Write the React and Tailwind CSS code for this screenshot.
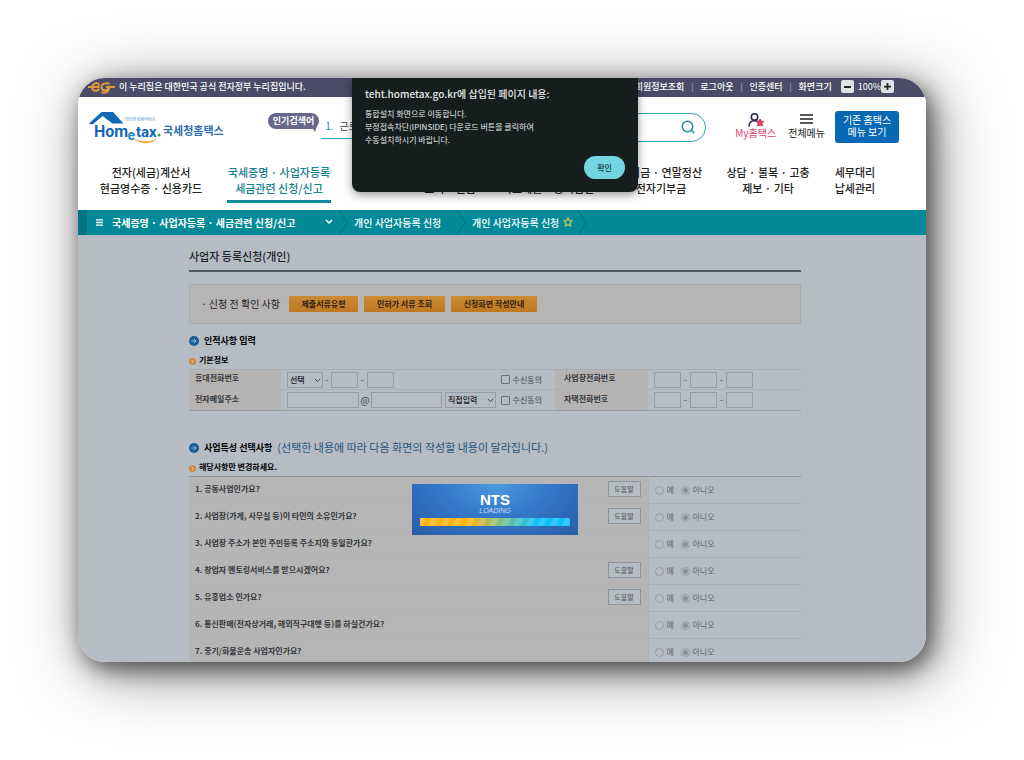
const KR = "font-['Noto_Sans_CJK_KR',sans-serif]";

const EgMark = () => (
  <svg viewBox="0 0 30 16" className="h-4 w-[30px] shrink-0" fill="none" stroke="#e39a3c" strokeWidth="2">
    <path d="M1 8h10.500c1.200-3.800-1.200-4.200-3-3.700C5.200 5.200 4.300 9 5.800 10.800c1.500 1.600 4.700 1.200 6.700-.8" />
    <path d="M22.500 4.800c-4-1.600-8 .2-8 3.400 0 3.600 5 4.300 7.500 1.300-.5 3.500-3.500 5-7.500 4M19 8h9" />
  </svg>
);

const HomeLogo = () => (
  <svg viewBox="0 0 74 34" className="h-[34px] w-[74px] shrink-0" role="img" aria-label="Hometax">
    <path d="M12.500 2H24l10.500 11.500H23.500L13.500 6 3.500 14.500 0 13.500z" fill="#1467b3" />
    <text x="36" y="11" fontSize="4" fill="#3f7fb5">인터넷 납세서비스</text>
    <g fontFamily="Roboto, sans-serif" fontWeight="700" fill="#1467b3">
      <text x="5" y="26.500" fontSize="16">Hom</text>
      <text x="38.500" y="29.500" fontSize="14" fill="#1c8fd0">e</text>
      <text x="47" y="26.500" fontSize="15">tax</text>
    </g>
    <circle cx="70" cy="25" r="1.500" fill="#35a853" />
    <path d="M46 29.500c6 4.500 15 4.500 21 0-6 2.700-15 2.700-21 0z" fill="#f0a12c" stroke="#f0a12c" strokeWidth=".5" />
  </svg>
);

const Crumb = () => (
  <svg viewBox="0 0 10 25" className="h-[25px] w-[10px] shrink-0" fill="none" stroke="#016f7e" strokeWidth="1">
    <path d="M1 0l8 12.500L1 25" />
  </svg>
);

const BlueBullet = () => (
  <svg viewBox="0 0 10 10" className="size-[10px] shrink-0">
    <circle cx="5" cy="5" r="5" fill="#175f96" />
    <path d="M2.500 5h4.500M5 3l2 2-2 2" stroke="#9dbcd6" fill="none" />
  </svg>
);

const OrangeBullet = () => (
  <svg viewBox="0 0 8 8" className="mt-[2px] size-[7px] shrink-0">
    <circle cx="4" cy="4" r="4" fill="#c98a3c" />
    <path d="M3 2l2 2-2 2" stroke="#e3d3bd" fill="none" />
  </svg>
);

const Down = () => (
  <svg viewBox="0 0 8 6" className="pointer-events-none absolute top-[6px] right-[2px] h-[5px] w-[7px]" fill="none" stroke="#33373c">
    <path d="M1 1l3 3.500L7 1" />
  </svg>
);

const box = "h-4 border border-[#989da3] bg-transparent px-1 text-[8px]";

const Pick = ({ label, text, width }) => (
  <span className="relative inline-flex">
    <select aria-label={label} className={`${box} ${width} appearance-none pl-[2px] leading-[14px] font-medium text-[#1d2024]`}>
      <option>{text}</option>
    </select>
    <Down />
  </span>
);

const Phone = ({ label }) => (
  <div className="flex items-center text-[8px] text-[#33373c]">
    {[0, 1, 2].map((i) => (
      <span key={i} className="flex items-center">
        {i > 0 && <span className="w-[9px] text-center">-</span>}
        <input aria-label={`${label} ${i + 1}`} className={`${box} w-[27px]`} />
      </span>
    ))}
  </div>
);

const Agree = ({ label }) => (
  <label className="flex items-center gap-[3px] text-[8px] text-[#44484e]">
    <input type="checkbox" aria-label={label} className="size-[9px] appearance-none rounded-[1px] border border-[#6b7077]" />
    수신동의
  </label>
);

const th = "bg-[#b6b4b3] pb-[3px] text-left text-[8px] font-bold text-[#33363a]";

const menus = [
  ["전자(세금)계산서", "현금영수증 · 신용카드"],
  ["국세증명 · 사업자등록", "세금관련 신청/신고"],
  ["세금신고"],
  ["납부", "고지 · 환급"],
  ["지급명세서", "자료제출 · 공익법인"],
  ["장려금 · 연말정산", "전자기부금"],
  ["상담 · 불복 · 고충", "제보 · 기타"],
  ["세무대리", "납세관리"],
];

const questions = [
  ["1. 공동사업인가요?", true],
  ["2. 사업장(가게, 사무실 등)이 타인의 소유인가요?", true],
  ["3. 사업장 주소가 본인 주민등록 주소지와 동일한가요?", false],
  ["4. 창업자 멘토링서비스를 받으시겠어요?", true],
  ["5. 유흥업소 인가요?", true],
  ["6. 통신판매(전자상거래, 해외직구대행 등)를 하실건가요?", false],
  ["7. 중기/화물운송 사업자인가요?", false],
];

const radio = "size-[9px] appearance-none rounded-full border border-[#989da3] checked:bg-[radial-gradient(circle,#8a8f95_0_2px,transparent_3px)]";

function TopBar() {
  return (
    <div className="flex h-[19px] shrink-0 items-center bg-[#4b4b68] pr-8 pb-[2px] pl-[9px] text-[9px] text-white">
      <EgMark />
      <span className="ml-[2px] font-medium">이 누리집은 대한민국 공식 전자정부 누리집입니다.</span>
      <div className="ml-auto flex items-center">
        {["회원정보조회", "로그아웃", "인증센터", "화면크기"].map((t, i) => (
          <span key={t} className="flex items-center">
            {i > 0 && <span className="w-4 text-center text-[8px] text-[#b9b9cc]">|</span>}
            <a href="#top" className="font-medium">{t}</a>
          </span>
        ))}
        <button aria-label="축소" className="ml-[9px] grid size-[13px] place-items-center rounded-[2px] bg-[#dfe3e8]">
          <span className="h-[2px] w-[7px] bg-[#222]" />
        </button>
        <span className="ml-1">100%</span>
        <button aria-label="확대" className="grid size-[13px] place-items-center rounded-[2px] bg-[#dfe3e8]">
          <svg viewBox="0 0 8 8" className="size-[7px]" stroke="#222" strokeWidth="2"><path d="M4 0v8M0 4h8" /></svg>
        </button>
      </div>
    </div>
  );
}

function Header() {
  return (
    <header className="flex h-[113px] shrink-0 flex-col bg-white">
      <div className="flex h-[60px] items-center pr-[27px] pl-[11px]">
        <HomeLogo />
        <span className="mt-[6px] text-[11px] font-bold text-[#2f6fae]">국세청홈택스</span>
        <span className="relative mb-[13px] ml-auto h-4 rounded-full bg-[#69688a] px-[5px] text-[9px] leading-[15px] font-bold text-white">
          인기검색어
          <svg viewBox="0 0 6 6" className="absolute right-[2px] -bottom-[3px] size-[6px]" fill="#69688a"><path d="M0 0h6L4 6z" /></svg>
        </span>
        <span className="ml-[2px] h-[23px] w-[150px] border-b border-[#3aa9ba] pl-1 text-[10px] leading-[20px] text-[#444]">
          <span className="mr-[6px] text-[#16899a]">1.</span>근로장려금
        </span>
        <label className="ml-5 flex h-[29px] w-[215px] items-center rounded-full border border-[#2fa5b5] pr-[10px]">
          <input aria-label="검색" className="min-w-0 flex-1 bg-transparent" />
          <svg viewBox="0 0 14 14" className="size-[14px]" fill="none" stroke="#1c8f9f" strokeWidth="1.500"><circle cx="6.500" cy="6.500" r="5.200" /><path d="M10.300 10.300l3 3" /></svg>
        </label>
        <a href="#my" className="mb-[2px] ml-[29px] flex flex-col items-center text-[10px] leading-3 text-[#e0436c]">
          <svg viewBox="0 0 18 14" className="h-[14px] w-[18px]" fill="none">
            <g stroke="#27254b" strokeWidth="1.500"><circle cx="7.500" cy="4" r="3.200" /><path d="M2 13.500c0-4 2.500-5.800 5.500-5.800 1.500 0 2.500.3 3.500 1" /></g>
            <path d="M13 6l1.200 2 2.600.5-1.800 1.900.4 2.600-2.400-1.100-2.400 1.100.4-2.600-1.800-1.900 2.600-.5z" fill="#e0436c" stroke="#c03a5e" strokeWidth="1" />
          </svg>
          My홈택스
        </a>
        <button className="mb-[2px] ml-3 flex flex-col items-center gap-[2px] text-[10px] leading-3 text-[#222]">
          <svg viewBox="0 0 13 10" className="my-[1px] h-[10px] w-[13px]" stroke="#222" strokeWidth="1.500"><path d="M0 1h13M0 5h13M0 9h13" /></svg>
          전체메뉴
        </button>
        <button className="ml-[10px] h-8 w-16 shrink-0 rounded-[3px] bg-[#0768b3] pb-[2px] text-[10px] leading-3 text-white">기존 홈택스<br />메뉴 보기</button>
      </div>
      <nav className="grid flex-1 grid-cols-[126fr_130fr_62fr_88fr_108fr_118fr_96fr_78fr] pr-8 pl-[10px]">
        {menus.map((m, i) => (
          <a key={m[0]} href="#menu" className={`flex flex-col items-center pt-[7px] text-[11px] leading-4 font-medium whitespace-nowrap ${i === 1 ? "text-[#10808e]" : "text-[#222]"}`}>
            {m.map((t) => <span key={t}>{t}</span>)}
            {i === 1 && <span className="mt-1 h-[3px] w-[104px] bg-[#10899a]" />}
          </a>
        ))}
      </nav>
    </header>
  );
}

function Trail() {
  return (
    <div className="flex h-[25px] shrink-0 items-center border-l-[9px] border-[#027584] bg-[#028a99] text-[10px] font-medium text-white">
      <svg viewBox="0 0 8 8" className="ml-[9px] size-[7px]" stroke="#fff" strokeWidth="1.500"><path d="M0 1h8M0 4h8M0 7h8" /></svg>
      <button className="ml-[9px] flex w-[221px] items-center justify-between pb-[1px] font-bold">
        국세증명 · 사업자등록 · 세금관련 신청/신고
        <svg viewBox="0 0 8 6" className="h-[6px] w-2" fill="none" stroke="#fff" strokeWidth="1.500"><path d="M1 1l3 3 3-3" /></svg>
      </button>
      <span className="w-[5px]" />
      <Crumb />
      <a href="#1" className="w-[108px] pb-[1px] pl-[6px]">개인 사업자등록 신청</a>
      <Crumb />
      <a href="#2" className="flex w-[111px] items-center justify-between pb-[1px] pl-[6px]">
        개인 사업자등록 신청
        <svg viewBox="0 0 12 12" className="mr-1 size-[10px]" fill="none" stroke="#d6cf4a" strokeWidth="1.300"><path d="M6 1l1.500 3.200 3.500.5-2.500 2.500.6 3.500L6 9.100l-3.100 1.600.6-3.500L1 4.700l3.500-.5z" /></svg>
      </a>
      <Crumb />
    </div>
  );
}

function Form() {
  return (
    <main className="flex-1 bg-[#b6bcc3] pr-[125px] pl-[111px] text-[#1d2024]">
      <h1 className="h-[37px] border-b-2 border-[#535960] pt-[13px] text-[11px] leading-4 font-medium">사업자 등록신청(개인)</h1>
      <div className="mt-3 flex h-10 items-center border border-[#a8acb0] bg-[#b6b5b4] pl-[11px] text-[10px]">
        <span className="w-[88px] pb-[1px]">· 신청 전 확인 사항</span>
        {[["제출서류유형", "w-[69px]"], ["인허가 서류 조회", "w-[81px]"], ["신청화면 작성안내", "w-[86px]"]].map(([t, w]) => (
          <button key={t} className={`mr-[6px] h-4 rounded-[1px] bg-linear-to-b from-[#cc8b34] to-[#bf7722] text-[8px] leading-4 font-bold text-[#2b2116] ${w}`}>{t}</button>
        ))}
      </div>
      <h2 className="mt-[10px] flex h-[14px] items-center gap-[5px] text-[9px] font-bold text-black"><BlueBullet />인적사항 입력</h2>
      <h3 className="mt-[5px] flex h-[14px] items-center gap-[3px] text-[8px] font-bold text-black"><OrangeBullet />기본정보</h3>
      <table className="mt-[2px] w-full table-fixed border-collapse border-y border-t-[#a9adb1] border-b-[#989da3]">
        <colgroup><col className="w-[92px]" /><col /><col className="w-[93px]" /><col className="w-[153px]" /></colgroup>
        <tbody>
          <tr className="h-5 border-b border-[#acb0b4]">
            <th className={`${th} pl-[6px]`}>휴대전화번호</th>
            <td className="pl-[6px]">
              <div className="flex items-center text-[8px]">
                <Pick label="휴대전화 앞자리" text="선택" width="w-9" />
                <span className="w-2 text-center">-</span>
                <input aria-label="휴대전화 가운데" className={`${box} w-[27px]`} />
                <span className="w-[9px] text-center">-</span>
                <input aria-label="휴대전화 끝" className={`${box} w-[27px]`} />
                <span className="mr-[13px] ml-auto"><Agree label="문자 수신동의" /></span>
              </div>
            </td>
            <th className={`${th} pl-[9px]`}>사업장전화번호</th>
            <td className="pl-[6px]"><Phone label="사업장전화번호" /></td>
          </tr>
          <tr className="h-[21px]">
            <th className={`${th} pl-[6px]`}>전자메일주소</th>
            <td className="pl-[6px]">
              <div className="flex items-center text-[10px] text-[#44484e]">
                <input aria-label="메일 아이디" className={`${box} w-[72px]`} />
                <span className="w-3 text-center leading-4">@</span>
                <input aria-label="메일 도메인" className={`${box} mr-[3px] w-[71px]`} />
                <Pick label="도메인 선택" text="직접입력" width="w-[51px]" />
                <span className="mr-[13px] ml-auto"><Agree label="메일 수신동의" /></span>
              </div>
            </td>
            <th className={`${th} pl-[9px]`}>자택전화번호</th>
            <td className="pl-[6px]"><Phone label="자택전화번호" /></td>
          </tr>
        </tbody>
      </table>
      <h2 className="mt-[29px] flex h-[15px] items-center gap-[5px] text-[9px] font-bold text-black">
        <BlueBullet />사업특성 선택사항
        <span className="pb-[1px] text-[11px] font-normal text-[#1f5580]">(선택한 내용에 따라 다음 화면의 작성할 내용이 달라집니다.)</span>
      </h2>
      <h3 className="mt-[5px] flex h-[14px] items-center gap-[3px] text-[8px] font-bold text-black"><OrangeBullet />해당사항만 변경하세요.</h3>
      <table className="mt-[2px] w-full table-fixed border-collapse border-t border-[#92979d]">
        <colgroup><col /><col className="w-[153px]" /></colgroup>
        <tbody>
          {questions.map(([q, help], i) => (
            <tr key={q} className="h-[27px]">
              <th className="border-r border-b border-[#afb1b2] bg-[#b5b5b5] pr-[7px] pb-[2px] pl-[6px] text-left text-[8px] font-bold text-[#33363a]">
                <div className="flex items-center justify-between">
                  <span>{q}</span>
                  {help && <button className="h-4 w-[33px] border border-[#8f949b] bg-[#b6bcc3] text-[7px] leading-[14px] font-medium text-[#5a5f65]">도움말</button>}
                </div>
              </th>
              <td className="border-b border-[#abafb2] pl-[6px] text-[8px] text-[#5f646a]">
                <div className="flex items-center">
                  <label className="flex w-[26px] items-center gap-[3px]"><input type="radio" name={`q${i}`} disabled className={radio} />예</label>
                  <label className="flex items-center gap-[3px]"><input type="radio" name={`q${i}`} defaultChecked disabled className={radio} />아니오</label>
                </div>
              </td>
            </tr>
          ))}
        </tbody>
      </table>
    </main>
  );
}

function Alert() {
  return (
    <div role="alertdialog" aria-label="알림" className="absolute top-0 left-[274px] w-[286px] rounded-b-lg bg-[#161d1d] px-[13px] pt-2 pb-[13px] text-[#e4e9e9] shadow-[0_3px_10px_rgba(0,0,0,0.4)]">
      <p className="text-[10px] leading-4 font-medium">teht.hometax.go.kr에 삽입된 페이지 내용:</p>
      <p className="mt-[5px] text-[8px] leading-[13px]">통합설치 화면으로 이동합니다.<br />부정접속차단(IPINSIDE) 다운로드 버튼을 클릭하여<br />수동설치하시기 바랍니다.</p>
      <button className="mt-[10px] ml-auto block h-[23px] w-[41px] rounded-full bg-[#76d5e2] text-[8px] font-medium text-[#0d3d46]">확인</button>
    </div>
  );
}

function Loading() {
  return (
    <div role="status" className="absolute top-[406px] left-[334px] flex h-[51px] w-[166px] flex-col items-center bg-[radial-gradient(ellipse_at_50%_0%,#4a9bdc_0%,#3478cb_45%,#2a5ca6_100%)] pt-[8px] font-['Liberation_Sans',sans-serif] text-white">
      <span className="text-[15px] leading-4 font-bold">NTS</span>
      <span className="text-[7px] leading-[6px] text-[#c9dcf2] italic">LOADING</span>
      <span className="mt-1 h-2 w-[150px] rounded-[1px] bg-[repeating-linear-gradient(115deg,rgba(255,255,255,0.15)_0_5px,transparent_6px_11px),linear-gradient(90deg,#fdb515_0%,#fdb515_33%,#5cc3a4_60%,#0fc0fb_78%)]" />
    </div>
  );
}

export default function App() {
  return (
    <div className={`flex h-screen bg-white pt-[78px] pr-[98px] pb-[98px] pl-[78px] ${KR}`}>
      <div className="relative flex flex-1 flex-col overflow-hidden rounded-[27px] shadow-[5px_7px_22px_rgba(0,0,0,0.55),9px_10px_62px_rgba(0,0,0,0.5)]">
        <TopBar />
        <Header />
        <Trail />
        <Form />
        <Alert />
        <Loading />
      </div>
    </div>
  );
}
